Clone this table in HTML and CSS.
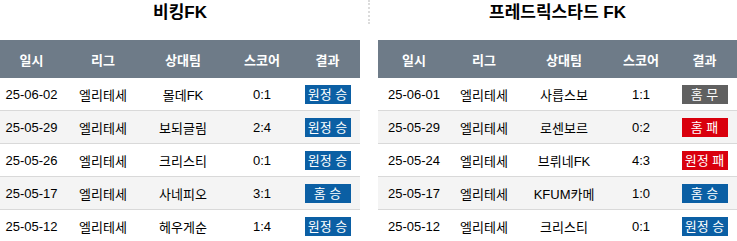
FILE: index.html
```html
<!DOCTYPE html>
<html lang="ko">
<head>
<meta charset="utf-8">
<link rel="stylesheet" href="styles.css">
</head>
<body>
<div class="page">
  <section class="panel">
    <h2 class="title">비킹FK</h2>
    <div class="table">
      <div class="row head"><span>일시</span><span>리그</span><span>상대팀</span><span>스코어</span><span>결과</span></div>
      <div class="row"><span>25-06-02</span><span>엘리테세</span><span>몰데FK</span><span>0:1</span><span><b class="badge win">원정 승</b></span></div>
      <div class="row alt"><span>25-05-29</span><span>엘리테세</span><span>보되글림</span><span>2:4</span><span><b class="badge win">원정 승</b></span></div>
      <div class="row"><span>25-05-26</span><span>엘리테세</span><span>크리스티</span><span>0:1</span><span><b class="badge win">원정 승</b></span></div>
      <div class="row alt"><span>25-05-17</span><span>엘리테세</span><span>사네피오</span><span>3:1</span><span><b class="badge win">홈 승</b></span></div>
      <div class="row"><span>25-05-12</span><span>엘리테세</span><span>헤우게순</span><span>1:4</span><span><b class="badge win">원정 승</b></span></div>
    </div>
  </section>
  <div class="divider"></div>
  <section class="panel right">
    <h2 class="title">프레드릭스타드 FK</h2>
    <div class="table">
      <div class="row head"><span>일시</span><span>리그</span><span>상대팀</span><span>스코어</span><span>결과</span></div>
      <div class="row"><span>25-06-01</span><span>엘리테세</span><span>사릅스보</span><span>1:1</span><span><b class="badge draw">홈 무</b></span></div>
      <div class="row alt"><span>25-05-29</span><span>엘리테세</span><span>로센보르</span><span>0:2</span><span><b class="badge loss">홈 패</b></span></div>
      <div class="row"><span>25-05-24</span><span>엘리테세</span><span>브뤼네FK</span><span>4:3</span><span><b class="badge loss">원정 패</b></span></div>
      <div class="row alt"><span>25-05-17</span><span>엘리테세</span><span>KFUM카메</span><span>1:0</span><span><b class="badge win">홈 승</b></span></div>
      <div class="row"><span>25-05-12</span><span>엘리테세</span><span>크리스티</span><span>0:1</span><span><b class="badge win">원정 승</b></span></div>
    </div>
  </section>
</div>
</body>
</html>
```

FILE: styles.css
```css
html, body {
  margin: 0;
  padding: 0;
  background: #ffffff;
}
body {
  font-family: "Liberation Sans", "Noto Sans CJK KR", sans-serif;
  font-size: 13px;
  color: #000000;
}
.page {
  display: flex;
  width: 737px;
}
.panel {
  flex: 0 0 360px;
}
.panel.right {
  flex: 0 0 359px;
}
.divider {
  flex: 0 0 18px;
  display: flex;
  justify-content: center;
}
.divider::before {
  content: "";
  display: block;
  width: 0;
  height: 24px;
  border-left: 2px dotted #dcdcdc;
}
.title {
  margin: 0;
  height: 40px;
  padding-top: 3px;
  box-sizing: border-box;
  text-align: center;
  font-size: 17px;
  font-weight: bold;
  line-height: 20px;
  color: #000000;
}
.row {
  display: grid;
  grid-template-columns: 63px 80px 80px 78px 59px;
  align-items: center;
  height: 32px;
  border-bottom: 1px solid #d9d9d9;
  text-align: center;
}
.row > span:last-child {
  padding-right: 6px;
}
.right .row {
  grid-template-columns: 72px 68px 92px 62px 65px;
}
.right .row > span:last-child {
  padding-right: 0;
}
.row.head {
  height: 38px;
  border-bottom: 0;
  background: #6e7b88;
  color: #ffffff;
  font-weight: bold;
}
.row.alt {
  background: #f4f4f4;
}
.badge {
  display: inline-block;
  width: 46px;
  height: 19px;
  line-height: 19px;
  color: #ffffff;
  font-weight: normal;
  vertical-align: middle;
}
.badge.win { background: #0b5fa4; }
.badge.loss { background: #d9000d; }
.badge.draw { background: #606060; }
```
